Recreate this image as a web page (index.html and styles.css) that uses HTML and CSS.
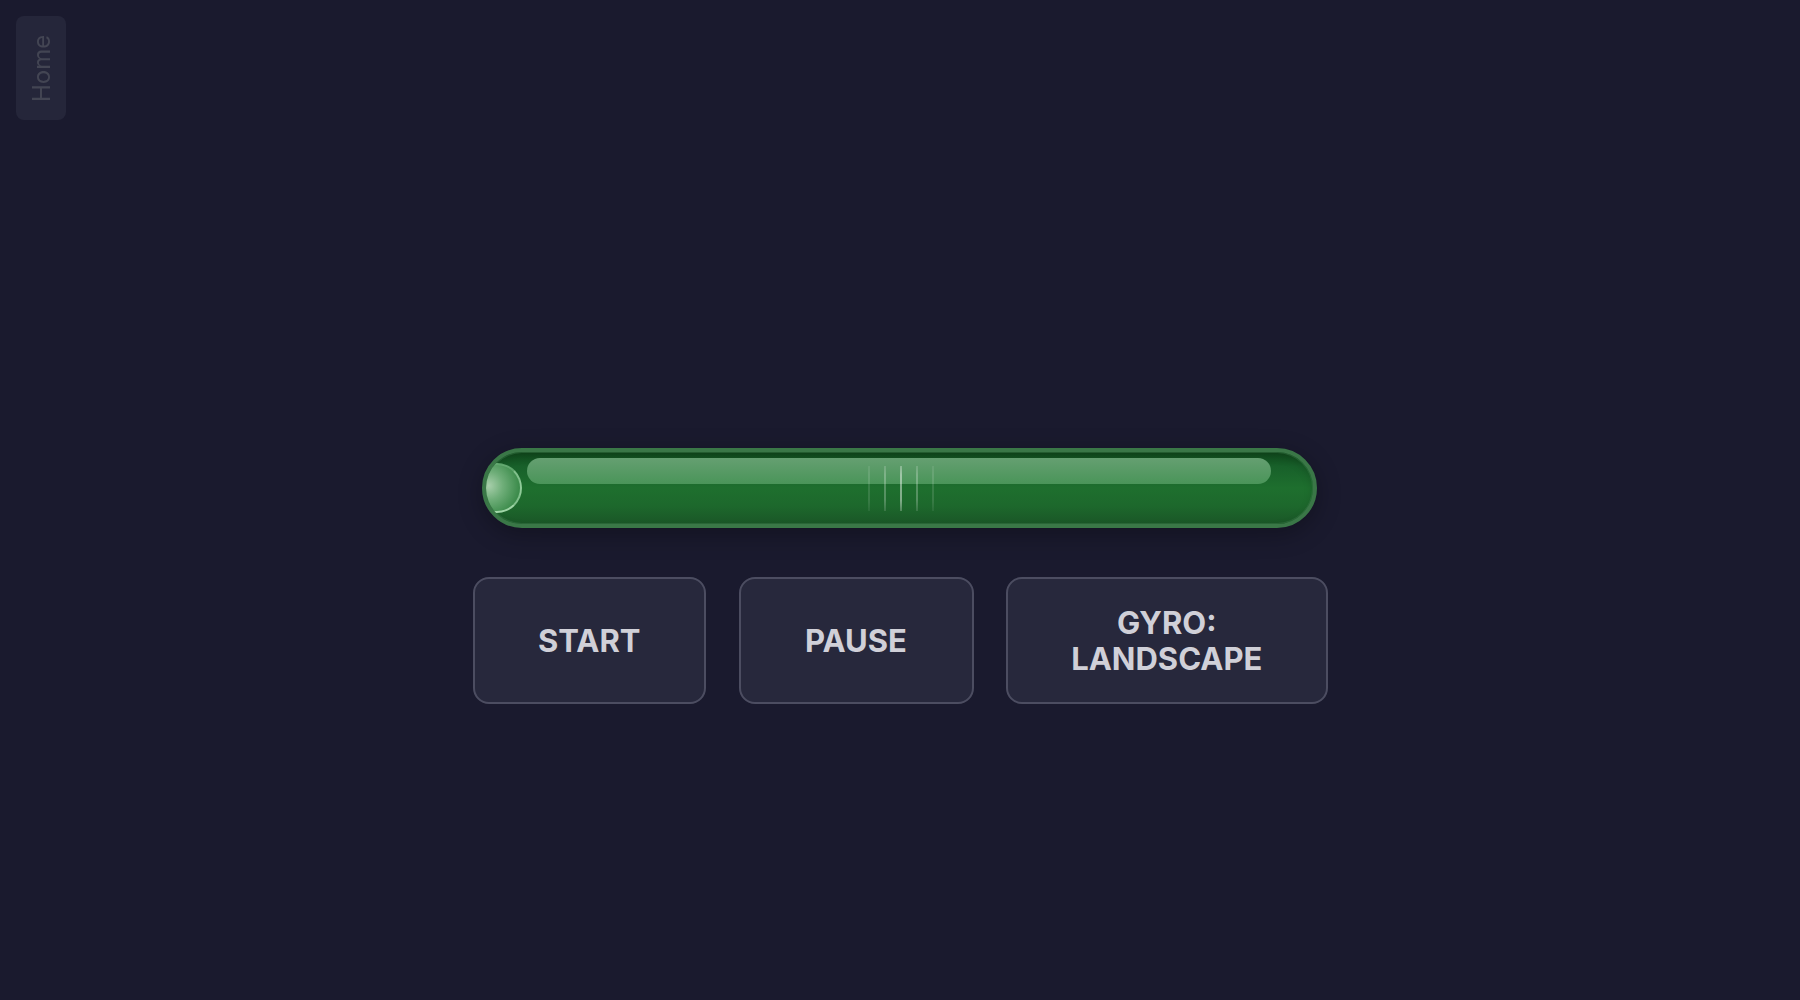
FILE: index.html
```html
<!DOCTYPE html>
<html lang="en">
  <head>
    <meta charset="UTF-8" />
    <meta name="viewport" content="width=device-width, initial-scale=1.0" />
    <link rel="stylesheet" href="styles.css">
    <title>Spirit Level</title>
  </head>
  <body>
    <a class="home" href="#">Home</a>
    <div class="container">
      <div class="tube">
        <div class="bubble"></div>
        <div class="shine"></div>
        <div class="ticks">
          <span class="tick tick-far"></span>
          <span class="tick tick-near"></span>
          <span class="tick tick-mid"></span>
          <span class="tick tick-near"></span>
          <span class="tick tick-far"></span>
        </div>
      </div>
      <div class="buttons">
        <button class="btn">START</button>
        <button class="btn btn-pause">PAUSE</button>
        <button class="btn btn-wide">GYRO:<br />LANDSCAPE</button>
      </div>
    </div>
  </body>
</html>
```

FILE: styles.css
```css
* {
  box-sizing: border-box;
}
body {
  margin: 0;
  min-height: 1000px;
  background-color: #1a1a2e;
  font-family: Inter, "Liberation Sans", sans-serif;
}
.home {
  position: absolute;
  top: 16px;
  left: 16px;
  width: 50px;
  height: 104px;
  display: flex;
  align-items: center;
  justify-content: center;
  writing-mode: vertical-rl;
  transform: rotate(180deg);
  background-color: #25263a;
  border-radius: 8px;
  color: #434553;
  font-size: 24px;
  text-decoration: none;
}
.container {
  display: flex;
  flex-direction: column;
  align-items: center;
  gap: 48px;
  padding-top: 448px;
}
.tube {
  position: relative;
  width: 835px;
  height: 80px;
  margin-right: 1px;
  overflow: hidden;
  border: 4px solid #3a7747;
  border-radius: 40px;
  background: linear-gradient(180deg, #104a1c 0%, #18602a 20%, #1e6f2e 50%, #1d682c 75%, #1a5627 100%);
  box-shadow: 0 6px 24px rgba(0, 0, 0, 0.3), inset 0 0 0 1px rgba(58, 119, 71, 0.5), inset 0 4px 8px rgba(0, 0, 0, 0.15);
}
.bubble {
  position: absolute;
  top: 11px;
  left: -14px;
  width: 50px;
  height: 50px;
  border: 2px solid;
  border-color: rgba(150, 205, 158, 0.35) rgba(160, 215, 168, 0.7) rgba(175, 225, 182, 0.85) transparent;
  border-radius: 50%;
  background: radial-gradient(circle at 32% 45%, #a8cfab 0%, #6fae79 35%, #3d8c4c 75%, #348343 100%);
}
.shine {
  position: absolute;
  top: 6px;
  left: 41px;
  width: 744px;
  height: 26px;
  border-radius: 13px;
  background: linear-gradient(180deg, #659f71 0%, #4a9559 100%);
}
.ticks {
  position: absolute;
  top: 14px;
  left: 382px;
  display: flex;
  gap: 14px;
  height: 45px;
}
.tick {
  width: 2px;
  background: linear-gradient(180deg, rgba(255, 255, 255, 0.6), #fff 20%, #fff 75%, rgba(255, 255, 255, 0.5));
  filter: blur(0.4px);
}
.tick-far {
  opacity: 0.12;
}
.tick-near {
  opacity: 0.25;
}
.tick-mid {
  opacity: 0.45;
}
.buttons {
  display: flex;
  gap: 32.5px;
  margin-top: 1px;
}
.btn {
  width: 233.5px;
  height: 127px;
  background-color: #27283c;
  border: 2px solid #4c4d61;
  border-radius: 16px;
  color: #d0d0d8;
  font-family: inherit;
  font-size: 31px;
  font-weight: 700;
  line-height: 36px;
}
.btn-pause {
  width: 235px;
}
.btn-wide {
  width: 321.5px;
}
```
